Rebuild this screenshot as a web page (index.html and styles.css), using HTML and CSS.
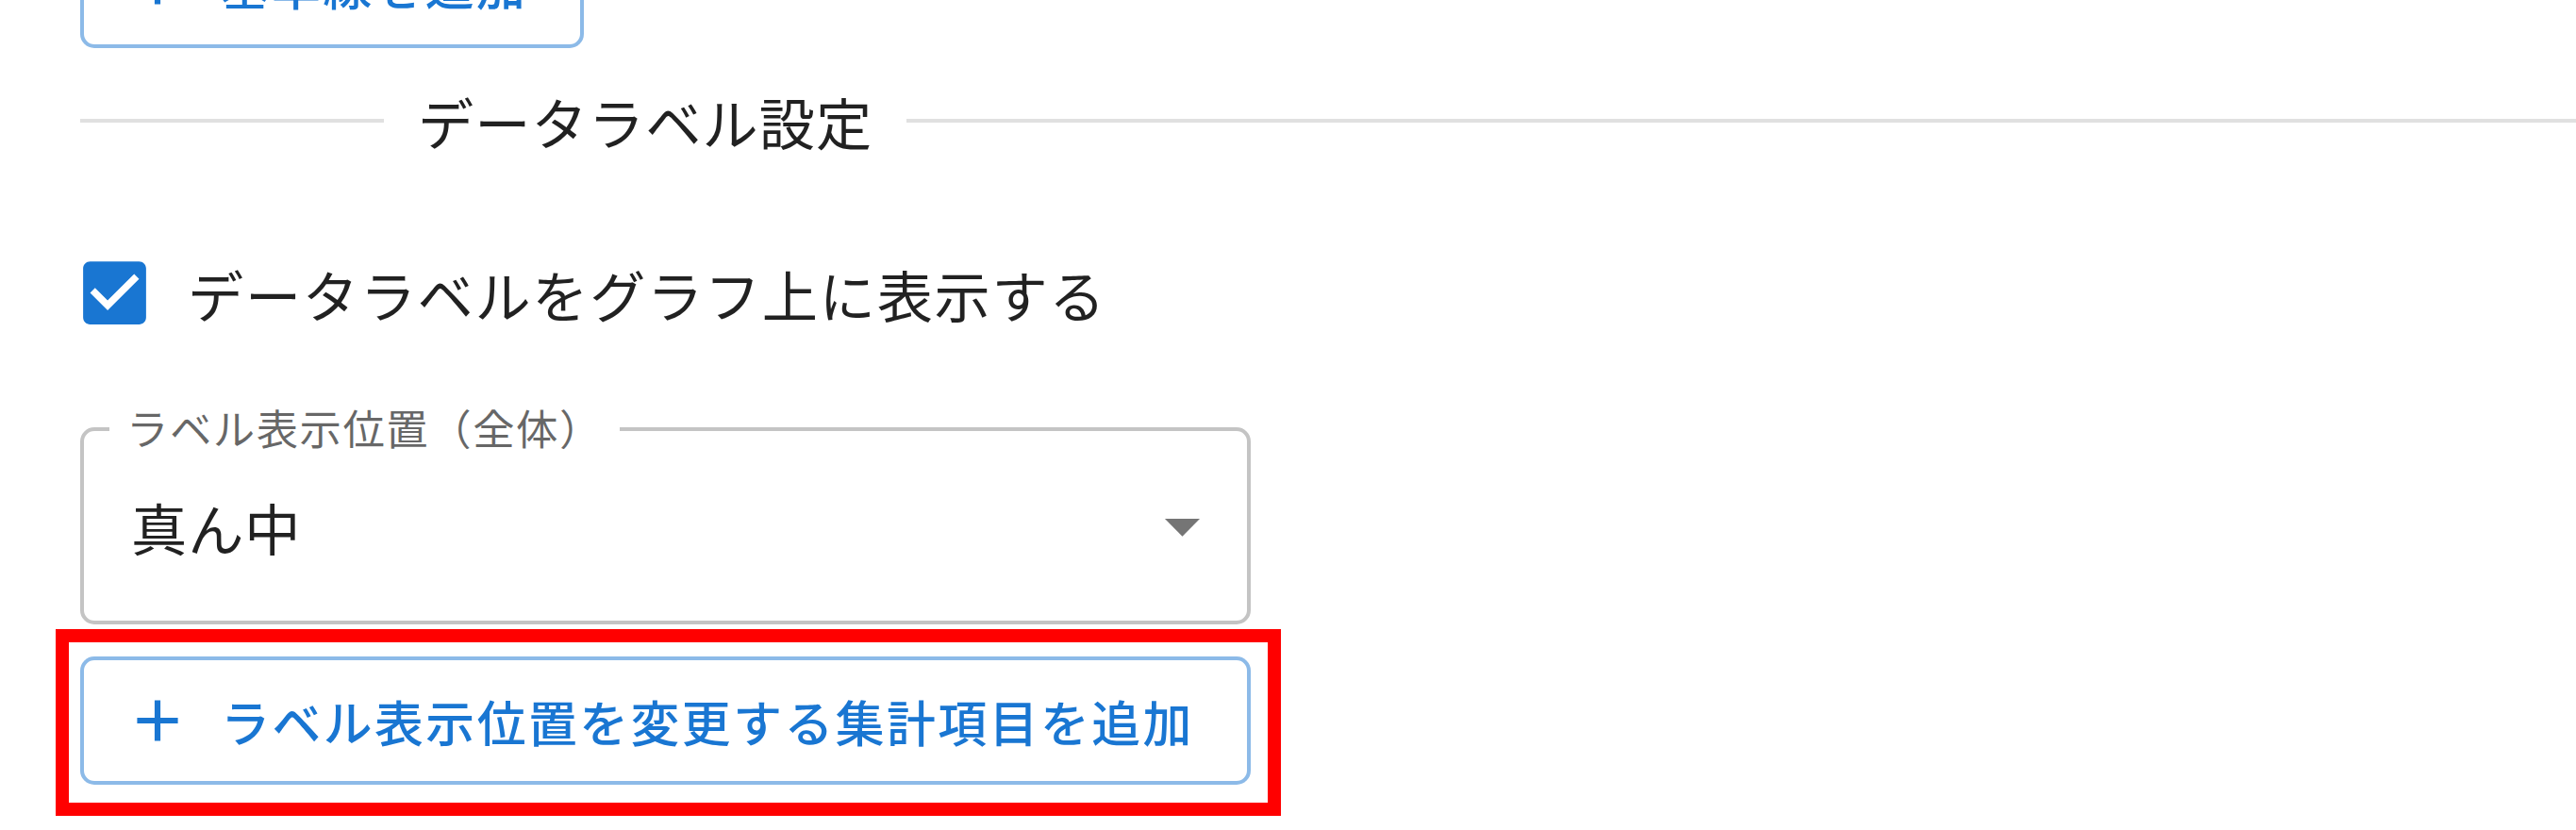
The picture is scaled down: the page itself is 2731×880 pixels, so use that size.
FILE: index.html
```html
<!DOCTYPE html>
<html lang="ja">
<head>
<meta charset="utf-8">
<link rel="stylesheet" href="styles.css">
</head>
<body>
<div class="page">
  <button class="btn btn-short">
    <svg class="btn-icon" viewBox="0 0 24 24"><path d="M19 13h-6v6h-2v-6H5v-2h6V5h2v6h6v2z"/></svg>
    <span>基準線を追加</span>
  </button>

  <div class="divider">
    <span class="divider-line divider-left"></span>
    <span class="divider-text">データラベル設定</span>
    <span class="divider-line divider-right"></span>
  </div>

  <label class="check-row">
    <span class="check-btn">
      <svg class="check-icon" viewBox="0 0 24 24"><path d="M19 3H5c-1.11 0-2 .9-2 2v14c0 1.1.89 2 2 2h14c1.11 0 2-.9 2-2V5c0-1.1-.89-2-2-2zm-9 14l-5-5 1.41-1.41L10 14.17l7.59-7.59L19 8l-9 9z"/></svg>
    </span>
    <span class="check-text">データラベルをグラフ上に表示する</span>
  </label>

  <div class="select">
    <span class="select-label">ラベル表示位置（全体）</span>
    <span class="select-value">真ん中</span>
    <svg class="select-arrow" viewBox="0 0 24 24"><path d="M7 10l5 5 5-5z"/></svg>
  </div>

  <div class="highlight">
    <button class="btn">
      <svg class="btn-icon" viewBox="0 0 24 24"><path d="M19 13h-6v6h-2v-6H5v-2h6V5h2v6h6v2z"/></svg>
      <span>ラベル表示位置を変更する集計項目を追加</span>
    </button>
  </div>
</div>
</body>
</html>
```

FILE: styles.css
```css
html, body {
  margin: 0;
  padding: 0;
  background: #ffffff;
  overflow: hidden;
}
body {
  font-family: "Noto Sans CJK JP", "Noto Sans", sans-serif;
  color: rgba(0, 0, 0, 0.87);
}
.page {
  margin-top: -85px;
  padding-left: 85px;
  width: 1241px;
  display: flex;
  flex-direction: column;
}
.btn {
  box-sizing: border-box;
  width: 1241px;
  height: 136px;
  border: 4px solid rgba(25, 118, 210, 0.5);
  border-radius: 15px;
  background: #ffffff;
  color: #1976d2;
  font-family: "Noto Sans CJK JP", "Noto Sans", sans-serif;
  font-size: 51.8px;
  font-weight: 500;
  letter-spacing: 2.5px;
  display: flex;
  align-items: center;
  justify-content: center;
  padding: 0 40px;
  cursor: pointer;
  white-space: nowrap;
}
.btn-short {
  width: 534px;
}
.btn-icon {
  width: 74px;
  height: 74px;
  fill: #1976d2;
  margin-left: -15px;
  margin-right: 30px;
  flex: none;
}
.divider {
  margin-top: 33px;
  height: 88px;
  display: flex;
  align-items: center;
  width: 2646px;
}
.divider-line {
  height: 4px;
  background: #e0e0e0;
}
.divider-left {
  width: 322px;
  flex: none;
}
.divider-right {
  flex: 1;
}
.divider-text {
  padding: 0 36px;
  font-size: 59.2px;
  letter-spacing: 1.1px;
  line-height: 88px;
  white-space: nowrap;
}
.check-row {
  margin-top: 61px;
  margin-left: -41px;
  display: flex;
  align-items: center;
  height: 155px;
}
.check-btn {
  padding: 33px;
  display: flex;
}
.check-icon {
  width: 89px;
  height: 89px;
  fill: #1976d2;
}
.check-text {
  font-size: 59.2px;
  letter-spacing: 1.7px;
  white-space: nowrap;
}
.select {
  position: relative;
  box-sizing: border-box;
  margin-top: 65px;
  height: 209px;
  border: 4px solid #c4c4c4;
  border-radius: 15px;
  display: flex;
  align-items: center;
  padding-left: 50px;
  padding-right: 24px;
}
.select-label {
  position: absolute;
  left: 27px;
  top: -34px;
  padding: 0 18px;
  background: #ffffff;
  color: rgba(0, 0, 0, 0.6);
  font-size: 44.4px;
  letter-spacing: 1.5px;
  line-height: 60px;
  white-space: nowrap;
}
.select-value {
  flex: 1;
  font-size: 59.2px;
  letter-spacing: 1px;
}
.select-arrow {
  width: 89px;
  height: 89px;
  fill: rgba(0, 0, 0, 0.54);
  flex: none;
}
.highlight {
  margin-top: 5px;
  margin-left: -26px;
  width: 1241px;
  border: 14px solid #ff0000;
  padding: 15px 18px 19px 12px;
}
```
